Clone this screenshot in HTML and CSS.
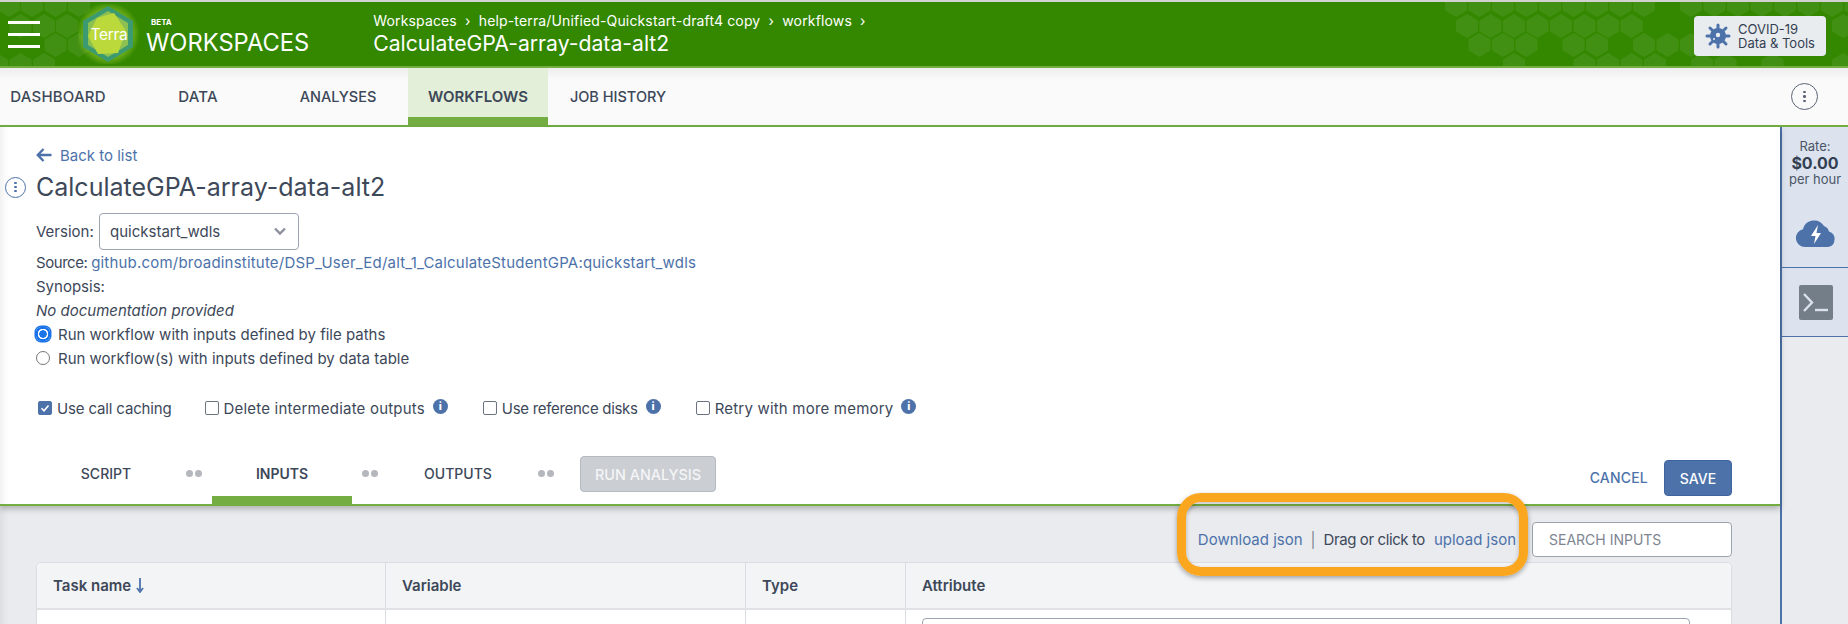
FILE: index.html
```html
<!DOCTYPE html>
<html lang="en">
<head>
<meta charset="utf-8">
<title>Terra Workspaces</title>
<link rel="stylesheet" href="styles.css">
</head>
<body>
<div class="app">
  <header class="topbar">
    <svg class="hexes" width="1848" height="64" viewBox="0 0 1848 64" aria-hidden="true">
      <defs>
        <polygon id="hx" points="11,0 21,6 22,7 22,17 21,18 11,24 1,18 0,17 0,7 1,6"/>
      </defs>
      <g fill="#fff" fill-opacity=".075">
        <use href="#hx" x="-2" y="-9"/><use href="#hx" x="21" y="-9"/><use href="#hx" x="44.500" y="-9"/><use href="#hx" x="68" y="-9"/>
        <use href="#hx" x="9.500" y="12"/><use href="#hx" x="33" y="12"/><use href="#hx" x="56" y="12"/>
        <use href="#hx" x="44.500" y="31"/><use href="#hx" x="68" y="31"/>
        <use href="#hx" x="-14" y="51"/><use href="#hx" x="9.500" y="51"/><use href="#hx" x="33" y="51"/>

        <use href="#hx" x="1445" y="-9"/><use href="#hx" x="1468.500" y="-9"/><use href="#hx" x="1492" y="-9"/><use href="#hx" x="1515.500" y="-9"/><use href="#hx" x="1539" y="-9"/><use href="#hx" x="1562.500" y="-9"/><use href="#hx" x="1586" y="-9"/><use href="#hx" x="1609.500" y="-9"/><use href="#hx" x="1633" y="-9"/><use href="#hx" x="1680" y="-9"/><use href="#hx" x="1703.500" y="-9"/><use href="#hx" x="1727" y="-9"/><use href="#hx" x="1750.500" y="-9"/><use href="#hx" x="1774" y="-9"/><use href="#hx" x="1797.500" y="-9"/><use href="#hx" x="1821" y="-9"/><use href="#hx" x="1844.500" y="-9"/>
        <use href="#hx" x="1456" y="12"/><use href="#hx" x="1479.500" y="12"/><use href="#hx" x="1503" y="12"/><use href="#hx" x="1526.500" y="12"/><use href="#hx" x="1550" y="12"/><use href="#hx" x="1573.500" y="12"/><use href="#hx" x="1597" y="12"/><use href="#hx" x="1620.500" y="12"/><use href="#hx" x="1832" y="12"/>
        <use href="#hx" x="1468.500" y="31"/><use href="#hx" x="1492" y="31"/><use href="#hx" x="1515.500" y="31"/><use href="#hx" x="1562.500" y="31"/><use href="#hx" x="1586" y="31"/><use href="#hx" x="1633" y="31"/><use href="#hx" x="1656.500" y="31"/><use href="#hx" x="1680" y="31"/>
        <use href="#hx" x="1503" y="51"/><use href="#hx" x="1573.500" y="51"/><use href="#hx" x="1597" y="51"/><use href="#hx" x="1620.500" y="51"/><use href="#hx" x="1644" y="51"/><use href="#hx" x="1691" y="51"/><use href="#hx" x="1714.500" y="51"/><use href="#hx" x="1761.500" y="51"/><use href="#hx" x="1832" y="51"/>
      </g>
    </svg>
    <button class="burger" aria-label="Menu"><span></span><span></span><span></span></button>
    <svg class="logo" width="64" height="60" viewBox="0 0 64 60" aria-hidden="true">
      <defs>
        <radialGradient id="glow"><stop offset="60%" stop-color="#b6dc3c" stop-opacity=".7"/><stop offset="100%" stop-color="#b6dc3c" stop-opacity="0"/></radialGradient>
      </defs>
      <circle cx="30" cy="30" r="32" fill="url(#glow)"/>
      <polygon points="30,2 55,17 55,43 30,58 5,43 5,17" fill="#3c9a70"/>
      <polygon points="30,7 50,19 50,41 30,53 10,41 10,19" fill="#8cc152"/>
      <polygon points="36,9 48,27 40,49 20,50 10,32 19,14" fill="#bcd93c"/>
      <text x="31" y="36" class="logotext" text-anchor="middle">Terra</text>
    </svg>
    <div class="brand">
      <div class="beta">BETA</div>
      <div class="wordmark">WORKSPACES</div>
    </div>
    <div class="crumbs">
      <div class="crumbline">Workspaces &nbsp;›&nbsp; help-terra/Unified-Quickstart-draft4 copy &nbsp;›&nbsp; workflows &nbsp;›</div>
      <div class="crumbtitle">CalculateGPA-array-data-alt2</div>
    </div>
    <button class="covid">
      <svg width="26" height="26" viewBox="0 0 26 26" aria-hidden="true">
        <g stroke="#4d72aa" stroke-width="3" stroke-linecap="round"><path d="M13 2v22M2 13h22M5 5l16 16M21 5L5 21"/></g>
        <circle cx="13" cy="13" r="8" fill="#4d72aa"/>
        <circle cx="13" cy="12" r="2.2" fill="#e9ecef"/><circle cx="9" cy="16" r="1" fill="#e9ecef"/>
      </svg>
      <span class="covidtext">COVID-19<br>Data &amp; Tools</span>
    </button>
  </header>

  <nav class="tabs">
    <a class="tab tab-first">DASHBOARD</a>
    <a class="tab">DATA</a>
    <a class="tab tab-tight">ANALYSES</a>
    <a class="tab tab-wf">WORKFLOWS</a>
    <a class="tab tab-tight">JOB HISTORY</a>
    <span class="spring"></span>
    <span class="kebab nav-kebab"><i></i><i></i><i></i></span>
  </nav>

  <div class="main">
    <div class="content">
      <section class="panel">
        <a class="back">
          <svg width="16" height="14" viewBox="0 0 16 14" aria-hidden="true"><path d="M7.500 1 1.800 7 7.500 13M2 7h13.500" fill="none" stroke="#4d72aa" stroke-width="2.400"/></svg>
          Back to list
        </a>
        <div class="titlerow">
          <span class="kebab title-kebab"><i></i><i></i><i></i></span>
          <h1 class="title">CalculateGPA-array-data-alt2</h1>
        </div>
        <div class="versionrow">
          <span class="vlabel">Version:</span>
          <div class="select"><span>quickstart_wdls</span>
            <svg width="14" height="9" viewBox="0 0 14 9" aria-hidden="true"><path d="M2 1.500 7 6.500 12 1.500" fill="none" stroke="#8a919c" stroke-width="2.400"/></svg>
          </div>
        </div>
        <div class="line source"><span class="srclabel">Source: </span><a class="link link-wide">github.com/broadinstitute/DSP_User_Ed/alt_1_CalculateStudentGPA:quickstart_wdls</a></div>
        <div class="line">Synopsis:</div>
        <div class="line"><em>No documentation provided</em></div>
        <label class="radio"><span class="rd rd-on"></span>Run workflow with inputs defined by file paths</label>
        <label class="radio"><span class="rd"></span>Run workflow(s) with inputs defined by data table</label>
        <div class="options">
          <label class="opt opt1"><span class="cb cb-on"><svg width="12" height="12" viewBox="0 0 12 12" aria-hidden="true"><path d="M2.500 6.200 5 8.700 9.500 3.400" fill="none" stroke="#fff" stroke-width="1.600"/></svg></span>Use call caching</label>
          <label class="opt opt2"><span class="cb"></span>Delete intermediate outputs<span class="info">i</span></label>
          <label class="opt opt3"><span class="cb"></span>Use reference disks<span class="info">i</span></label>
          <label class="opt opt4"><span class="cb"></span>Retry with more memory<span class="info">i</span></label>
        </div>
        <div class="steps">
          <a class="step">SCRIPT</a>
          <span class="dots"><i></i><i></i></span>
          <a class="step step-on">INPUTS</a>
          <span class="dots"><i></i><i></i></span>
          <a class="step">OUTPUTS</a>
          <span class="dots"><i></i><i></i></span>
          <button class="run">RUN ANALYSIS</button>
          <span class="spring"></span>
          <a class="cancel">CANCEL</a>
          <button class="save">SAVE</button>
        </div>
      </section>
      <section class="lower">
        <div class="toolbar">
          <span class="jsonlinks"><a class="link">Download json</a><span class="pipe">|</span><span class="drag">Drag or click to</span><a class="link upload">upload json</a></span>
          <div class="search">SEARCH INPUTS</div>
          <div class="callout"></div>
        </div>
        <div class="table">
          <div class="thead">
            <div class="th col1">Task name
              <svg width="8" height="15" viewBox="0 0 8 15" aria-hidden="true"><path d="M4 0v12M1 10l3 4 3-4" fill="none" stroke="#4d72aa" stroke-width="1.800"/></svg>
            </div>
            <div class="th col2">Variable</div>
            <div class="th col3">Type</div>
            <div class="th col4">Attribute</div>
          </div>
          <div class="trow">
            <div class="td col1"></div><div class="td col2"></div><div class="td col3"></div>
            <div class="td col4"><div class="attr"></div></div>
          </div>
        </div>
      </section>
    </div>
    <aside class="side">
      <div class="rate">
        <div>Rate:</div>
        <div class="amount">$0.00</div>
        <div>per hour</div>
      </div>
      <div class="sidebtn">
        <svg width="42" height="30" viewBox="0 0 42 30" aria-hidden="true">
          <path d="M10 29a9 9 0 0 1-2-17.800A11.500 11.500 0 0 1 29 8a8 8 0 0 1 5 5.500A8 8 0 0 1 33 29z" fill="#4d72aa"/>
          <path d="M23 7 16 18h4.500L19 26l7-11h-4.500z" fill="#fff"/>
        </svg>
      </div>
      <div class="sidebtn">
        <svg width="34" height="35" viewBox="0 0 34 35" aria-hidden="true">
          <rect width="34" height="35" rx="2" fill="#747e88"/>
          <path d="M5 9l8 8.500-8 8.500" fill="none" stroke="#dbe2ec" stroke-width="2.400"/>
          <path d="M16 25h13" stroke="#dbe2ec" stroke-width="2.400"/>
        </svg>
      </div>
    </aside>
  </div>
</div>
</body>
</html>
```

FILE: styles.css
```css
* { box-sizing: border-box; }
html, body { margin: 0; padding: 0; height: 100%; overflow: hidden; }
body { font-family: "Inter", "Liberation Sans", sans-serif; font-size: 15px; color: #3d4859; background: #fff; }
.app { display: flex; flex-direction: column; height: 624px; overflow: hidden; padding-top: 2px; background: #d2d2d2; }
a { text-decoration: none; }
button { font-family: inherit; border: 0; padding: 0; }
.spring { flex: 1; }

.topbar { position: relative; display: flex; align-items: center; height: 66px; flex: none; background: #338800; border-bottom: 2px solid #74ae43; color: #fff; }
.hexes { position: absolute; left: 0; top: 0; }
.burger { position: relative; width: 32px; margin-left: 8px; background: none; display: flex; flex-direction: column; gap: 9px; }
.burger span { display: block; height: 3px; background: #fff; width: 32px; }
.logo { position: relative; margin-left: 38px; flex: none; }
.logotext { font-family: "Inter", sans-serif; font-size: 15.500px; letter-spacing: -.3px; fill: #fff; }
.brand { position: relative; margin-left: 4px; padding-top: 7px; }
.beta { font-size: 8px; font-weight: 700; margin-left: 5px; line-height: 11px; }
.wordmark { font-size: 23.700px; line-height: 30px; }
.crumbs { position: relative; margin-left: 64px; }
.crumbline { font-size: 14px; line-height: 18px; letter-spacing: .15px; }
.crumbtitle { font-size: 21.200px; line-height: 26px; }
.covid { position: absolute; right: 22px; top: 14px; width: 132px; height: 40px; background: #e9ecef; border-radius: 4px; display: flex; align-items: center; gap: 7px; padding-left: 11px; color: #333f52; }
.covidtext { font-size: 13px; line-height: 14px; text-align: left; }

.tabs { display: flex; align-items: stretch; height: 59px; flex: none; background: linear-gradient(#eeeeee, #fafafa 12px); border-bottom: 2px solid #74ae43; font-size: 15px; font-weight: 500; }
.tab { display: flex; align-items: center; justify-content: center; width: 140px; color: #3d4859; letter-spacing: .2px; }
.tab-first { margin-left: -12px; }
.tab-tight { font-size: 14.500px; letter-spacing: 0; }
.tab-wf { background: #e3efd8; border-bottom: 8px solid #74ae43; font-weight: 600; padding-top: 8px; letter-spacing: 0; }
.kebab { display: inline-flex; flex-direction: column; align-items: center; justify-content: center; gap: 2px; border-radius: 50%; border: 1.300px solid #5a6474; }
.kebab i { width: 2.500px; height: 2.500px; border-radius: 50%; background: #5a6474; }
.nav-kebab { width: 27px; height: 27px; align-self: center; margin-right: 30px; }

.main { display: flex; flex: 1; min-height: 0; }
.content { flex: none; width: 1780px; background: #e9ebee; }
.panel { height: 379px; background: #fff; border-bottom: 2px solid #74ae43; box-shadow: 0 3px 6px rgba(0,0,0,.25), inset 8px 0 8px -6px rgba(0,0,0,.08); padding: 19px 0 0 36px; position: relative; }
.back { display: flex; align-items: center; gap: 8px; color: #4d72aa; height: 18px; }
.titlerow { display: flex; align-items: center; margin-top: 8px; height: 30px; }
.title-kebab { width: 21px; height: 21px; margin-left: -31px; margin-right: 10px; border-color: #4d72aa; }
.title-kebab i { background: #4d72aa; width: 2.200px; height: 2.200px; }
.title { margin: 0; font-size: 25px; font-weight: 400; color: #3d4859; }
.versionrow { display: flex; align-items: center; margin-top: 11px; }
.vlabel { width: 63px; }
.select { display: flex; align-items: center; justify-content: space-between; width: 200px; height: 37px; border: 1px solid #9ba3af; border-radius: 4px; padding: 0 11px 0 10px; }
.line { height: 24px; line-height: 24px; }
.source { margin-top: 1px; }
.srclabel { letter-spacing: -.45px; }
.link { color: #4d72aa; }
.link-wide { letter-spacing: .2px; }
.radio { display: flex; align-items: center; height: 24px; gap: 8px; position: relative; top: -1px; }
.rd { width: 14px; height: 14px; border-radius: 50%; border: 1px solid #767676; background: #fff; }
.rd-on { border: 0; border-radius: 5px; background: radial-gradient(circle, #1a73e8 0 3.500px, #fff 4px 5px, #1a73e8 5.500px); box-shadow: 0 0 0 1.500px #1a73e8; }
.options { display: flex; align-items: center; margin-top: 25px; height: 24px; }
.opt { display: flex; align-items: center; gap: 5px; }
.opt1 { margin-left: 2px; letter-spacing: -.15px; }
.opt2 { margin-left: 33px; letter-spacing: .2px; }
.opt3 { margin-left: 35px; letter-spacing: -.3px; }
.opt4 { margin-left: 35px; letter-spacing: .2px; }
.cb { width: 14px; height: 14px; flex: none; border: 1px solid #6b7380; border-radius: 2px; display: flex; align-items: center; justify-content: center; }
.cb-on { background: #4d72aa; border-color: #4d72aa; }
.info { width: 15px; height: 15px; border-radius: 50%; background: #4d72aa; color: #fff; font-size: 11px; font-weight: 800; text-align: center; line-height: 15px; margin-left: 3px; margin-top: -4px; letter-spacing: 0; }
.steps { position: absolute; left: 36px; right: 48px; top: 329px; height: 48px; display: flex; align-items: flex-start; }
.step { display: flex; align-items: center; justify-content: center; width: 140px; height: 48px; padding-bottom: 13px; font-weight: 500; color: #3d4859; font-size: 14px; }
.step-on { border-bottom: 8px solid #74ae43; padding-bottom: 5px; font-weight: 600; }
.dots { display: flex; gap: 2px; width: 36px; height: 35px; align-items: center; justify-content: center; }
.dots i { width: 7px; height: 7px; border-radius: 50%; background: #b4b8be; }
.run { width: 136px; height: 36px; background: #cbced3; border: 1px solid #b5bac1; border-radius: 4px; color: #f4f5f6; font-size: 14.400px; font-weight: 500; margin-left: 16px; }
.cancel { color: #4d72aa; font-size: 14px; font-weight: 500; line-height: 36px; margin-right: 16px; margin-top: 4px; letter-spacing: .2px; }
.save { width: 68px; height: 36px; background: #4d72aa; color: #fff; border-radius: 4px; border: 1px solid #3f65a0; font-size: 14px; font-weight: 500; margin-top: 4px; }
.lower { padding: 16px 48px 0 36px; box-shadow: inset 8px 0 8px -6px rgba(0,0,0,.08); height: 118px; }
.toolbar { position: relative; display: flex; justify-content: flex-end; align-items: center; height: 35px; }
.jsonlinks { margin-right: 16px; }
.pipe { margin: 0 8px; color: #7d8590; }
.drag { letter-spacing: -.4px; }
.upload { margin-left: 9px; }
.search { width: 200px; height: 35px; background: #fff; border: 1px solid #9ba3af; border-radius: 4px; padding: 0 16px; line-height: 33px; color: #7d8590; font-size: 14px; }
.callout { position: absolute; left: 1141px; top: -29px; width: 351px; height: 83px; border: 9px solid #fba61f; border-radius: 24px; box-shadow: 0 2px 5px rgba(0,0,0,.35), inset 0 2px 4px rgba(0,0,0,.25); }
.table { margin-top: 5px; background: #fff; border: 1px solid #d9dce0; border-radius: 5px 5px 0 0; }
.thead { display: flex; height: 47px; background: #f3f4f6; border-bottom: 2px solid #dfe1e4; border-radius: 5px 5px 0 0; }
.th { display: flex; align-items: center; gap: 5px; padding-left: 16px; font-weight: 600; font-size: 15px; border-right: 1px solid #d9dce0; flex: none; }
.trow { display: flex; height: 60px; }
.td { padding: 8px 15px 0 16px; border-right: 1px solid #d9dce0; flex: none; }
.col1 { width: 349px; }
.col2 { width: 360px; }
.col3 { width: 160px; }
.col4 { flex: 1; border-right: 0; }
.attr { height: 36px; width: 768px; background: #fff; border: 1px solid #9ba3af; border-radius: 4px; }

.side { flex: 1; background: #e9ebee; border-left: 2px solid #4d72aa; display: flex; flex-direction: column; font-size: 13px; }
.rate { height: 72px; padding-top: 12px; text-align: center; background: #dce3ee; line-height: 15px; color: #4a5566; }
.amount { font-size: 16px; font-weight: 700; color: #333f52; line-height: 18px; }
.sidebtn { display: flex; align-items: center; justify-content: center; background: #dce3ee; height: 69px; padding-left: 2px; border-bottom: 1px solid #4d72aa; }
```
